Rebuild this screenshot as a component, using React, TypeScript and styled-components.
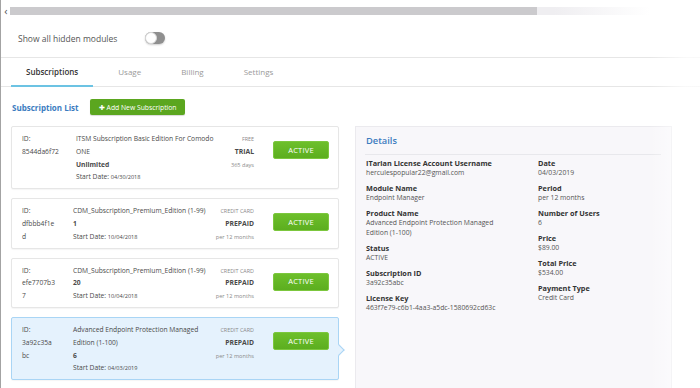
import styled, { createGlobalStyle } from 'styled-components';

type Sub = {
  id: string[];
  name: string[];
  qty: string;
  start: string;
  payment: string;
  plan: string;
  term: string;
  selected?: boolean;
  idWidth: number;
};

const subscriptions: Sub[] = [
  {
    id: ['8544da6f72'],
    name: ['ITSM Subscription Basic Edition For Comodo', 'ONE'],
    qty: 'Unlimited',
    start: '04/30/2018',
    payment: 'FREE',
    plan: 'TRIAL',
    term: '365 days',
    idWidth: 54,
  },
  {
    id: ['dfbbb4f1e', 'd'],
    name: ['CDM_Subscription_Premium_Edition (1-99)'],
    qty: '1',
    start: '10/04/2018',
    payment: 'CREDIT CARD',
    plan: 'PREPAID',
    term: 'per 12 months',
    idWidth: 51,
  },
  {
    id: ['efe7707b3', '7'],
    name: ['CDM_Subscription_Premium_Edition (1-99)'],
    qty: '20',
    start: '10/04/2018',
    payment: 'CREDIT CARD',
    plan: 'PREPAID',
    term: 'per 12 months',
    idWidth: 51,
  },
  {
    id: ['3a92c35a', 'bc'],
    name: ['Advanced Endpoint Protection Managed', 'Edition (1-100)'],
    qty: '6',
    start: '04/03/2019',
    payment: 'CREDIT CARD',
    plan: 'PREPAID',
    term: 'per 12 months',
    selected: true,
    idWidth: 51,
  },
];

const leftDetails = [
  { label: 'ITarian License Account Username', value: ['herculespopular22@gmail.com'] },
  { label: 'Module Name', value: ['Endpoint Manager'] },
  { label: 'Product Name', value: ['Advanced Endpoint Protection Managed', 'Edition (1-100)'] },
  { label: 'Status', value: ['ACTIVE'] },
  { label: 'Subscription ID', value: ['3a92c35abc'] },
  { label: 'License Key', value: ['463f7e79-c6b1-4aa3-a5dc-1580692cd63c'] },
];

const rightDetails = [
  { label: 'Date', value: ['04/03/2019'] },
  { label: 'Period', value: ['per 12 months'] },
  { label: 'Number of Users', value: ['6'] },
  { label: 'Price', value: ['$89.00'] },
  { label: 'Total Price', value: ['$534.00'] },
  { label: 'Payment Type', value: ['Credit Card'] },
];

const tabs = ['Subscriptions', 'Usage', 'Billing', 'Settings'];

const App = () => {
  return (
    <Page>
      <GlobalStyle />
      <ScrollStrip>
        <ScrollArrow>‹</ScrollArrow>
        <ScrollTrack>
          <ScrollThumb />
        </ScrollTrack>
      </ScrollStrip>

      <ToggleRow>
        <ToggleLabel>Show all hidden modules</ToggleLabel>
        <Toggle>
          <Knob />
        </Toggle>
      </ToggleRow>

      <TabBar>
        {tabs.map((t, i) => (
          <Tab key={t} $active={i === 0}>
            {t}
          </Tab>
        ))}
      </TabBar>

      <ListHeader>
        <ListTitle>Subscription List</ListTitle>
        <AddButton>
          <Plus>✚</Plus> Add New Subscription
        </AddButton>
      </ListHeader>

      <Body>
        <CardList>
          {subscriptions.map((s) => (
            <Card key={s.id.join('')} $selected={!!s.selected}>
              <IdCol $width={s.idWidth}>
                <Line>ID:</Line>
                {s.id.map((l) => (
                  <Line key={l}>{l}</Line>
                ))}
              </IdCol>
              <NameCol>
                {s.name.map((l) => (
                  <Line key={l}>{l}</Line>
                ))}
                <Line $bold>{s.qty}</Line>
                <Line>
                  Start Date: <SmallDate>{s.start}</SmallDate>
                </Line>
              </NameCol>
              <PriceCol>
                <SmallCaps>{s.payment}</SmallCaps>
                <Plan>{s.plan}</Plan>
                <Term>{s.term}</Term>
              </PriceCol>
              <ActiveButton>ACTIVE</ActiveButton>
            </Card>
          ))}
        </CardList>

        <DetailsPanel>
          <DetailsTitle>Details</DetailsTitle>
          <DetailsGrid>
            <DetailsCol>
              {leftDetails.map((d) => (
                <Field key={d.label}>
                  <FieldLabel>{d.label}</FieldLabel>
                  {d.value.map((v) => (
                    <FieldValue key={v}>{v}</FieldValue>
                  ))}
                </Field>
              ))}
            </DetailsCol>
            <DetailsCol>
              {rightDetails.map((d) => (
                <Field key={d.label}>
                  <FieldLabel>{d.label}</FieldLabel>
                  {d.value.map((v) => (
                    <FieldValue key={v}>{v}</FieldValue>
                  ))}
                </Field>
              ))}
            </DetailsCol>
          </DetailsGrid>
        </DetailsPanel>
      </Body>
      <FadeEdge />
    </Page>
  );
};

export default App;

const GlobalStyle = createGlobalStyle`
  html, body {
    margin: 0;
    padding: 0;
    background: #ffffff;
    font-family: 'Open Sans', 'Noto Sans', sans-serif;
  }
`;

const Page = styled.div`
  position: relative;
  width: 700px;
  height: 388px;
  overflow: hidden;
  box-sizing: border-box;
  border-left: 1px solid #a3a3a3;
  color: #444;
`;

const ScrollStrip = styled.div`
  display: flex;
  align-items: center;
  height: 8px;
  margin-top: 7px;
  padding-left: 1px;
`;

const ScrollArrow = styled.span`
  width: 8px;
  font-size: 11px;
  line-height: 8px;
  color: #555;
  text-align: center;
`;

const ScrollTrack = styled.div`
  height: 8px;
  width: 640px;
  background: linear-gradient(to right, #efeef1 85%, rgba(239, 238, 241, 0));
`;

const ScrollThumb = styled.div`
  height: 100%;
  width: 527px;
  background: #cbcacd;
`;

const ToggleRow = styled.div`
  display: flex;
  align-items: center;
  height: 38px;
  padding: 4px 0 0 17px;
  border-bottom: 1px solid #e6e6e6;
`;

const ToggleLabel = styled.span`
  font-size: 8.5px;
  color: #555;
  width: 127px;
`;

const Toggle = styled.div`
  width: 20px;
  height: 12px;
  border-radius: 6px;
  background: #8f8f8f;
  position: relative;
  box-shadow: 0 1px 2px rgba(0, 0, 0, 0.2);
`;

const Knob = styled.div`
  position: absolute;
  left: 0;
  top: 0;
  width: 12px;
  height: 12px;
  border-radius: 50%;
  background: #fff;
  box-sizing: border-box;
  border: 1px solid #d8d8d8;
`;

const TabBar = styled.div`
  display: flex;
  gap: 10px;
  height: 28px;
  padding-left: 10px;
  border-bottom: 1px solid #e6e6e6;
`;

const Tab = styled.div<{ $active: boolean }>`
  display: flex;
  align-items: center;
  padding: 0 15px;
  font-size: 8px;
  font-weight: ${(p) => (p.$active ? 600 : 400)};
  color: ${(p) => (p.$active ? '#333' : '#9a9a9a')};
  border-bottom: 2px solid ${(p) => (p.$active ? '#6cc3e3' : 'transparent')};
  margin-bottom: -1px;
`;

const ListHeader = styled.div`
  display: flex;
  align-items: center;
  gap: 11px;
  height: 39px;
  padding: 1px 0 0 11px;
  box-sizing: border-box;
`;

const ListTitle = styled.span`
  font-size: 8px;
  font-weight: 700;
  color: #3c7cbf;
`;

const AddButton = styled.div`
  display: flex;
  align-items: center;
  gap: 2px;
  height: 16px;
  padding: 0 8px 0 9px;
  border-radius: 2px;
  background: #5ba61f;
  color: #fff;
  font-size: 6.8px;
  box-shadow: 0 1px 1px rgba(0, 0, 0, 0.15);
`;

const Plus = styled.span`
  font-size: 7px;
`;

const Body = styled.div`
  display: flex;
  gap: 16px;
  padding-left: 10px;
`;

const CardList = styled.div`
  display: flex;
  flex-direction: column;
  gap: 9px;
  width: 328px;
`;

const Card = styled.div<{ $selected: boolean }>`
  position: relative;
  display: flex;
  padding: 6px 9px 4px 10px;
  border: 1px solid ${(p) => (p.$selected ? '#a9d5f5' : '#e6e6e6')};
  background: ${(p) => (p.$selected ? '#e5f2fd' : '#fff')};
  border-radius: 2px;
  box-shadow: 0 1px 1px rgba(0, 0, 0, 0.04);
  font-size: 6.7px;
  line-height: 12.8px;
  color: #4a4a4a;

  ${(p) =>
    p.$selected &&
    `
    &::after {
      content: '';
      position: absolute;
      right: -5px;
      top: 28px;
      width: 7px;
      height: 7px;
      background: #e5f2fd;
      border-top: 1px solid #a9d5f5;
      border-right: 1px solid #a9d5f5;
      transform: rotate(45deg);
    }
  `}
`;

const IdCol = styled.div<{ $width: number }>`
  width: ${(p) => p.$width}px;
  flex-shrink: 0;
`;

const NameCol = styled.div`
  flex: 1;
`;

const Line = styled.div<{ $bold?: boolean }>`
  white-space: nowrap;
  font-weight: ${(p) => (p.$bold ? 700 : 400)};
`;

const SmallDate = styled.span`
  font-size: 5.6px;
`;

const PriceCol = styled.div`
  display: flex;
  flex-direction: column;
  align-items: flex-end;
  margin-right: 19px;
`;

const SmallCaps = styled.div`
  font-size: 5.4px;
  color: #8a8a8a;
`;

const Plan = styled.div`
  font-size: 6.8px;
  font-weight: 700;
  color: #4a4a4a;
`;

const Term = styled.div`
  font-size: 5.6px;
  color: #8a8a8a;
`;

const ActiveButton = styled.div`
  align-self: flex-start;
  margin-top: 8px;
  width: 56px;
  height: 18px;
  display: flex;
  align-items: center;
  justify-content: center;
  border-radius: 2px;
  background: linear-gradient(#6dbf2b, #5cae1f);
  border: 1px solid #7cc73e;
  box-sizing: border-box;
  color: #fff;
  font-size: 7.5px;
  letter-spacing: 0.2px;
`;

const DetailsPanel = styled.div`
  width: 317px;
  height: 264px;
  box-sizing: border-box;
  background: #f8f7fa;
  border: 1px solid #ebeaee;
  padding: 0 10px 0 9px;
`;

const DetailsTitle = styled.div`
  height: 27px;
  display: flex;
  align-items: center;
  font-size: 9.3px;
  font-weight: 600;
  color: #3c7cbf;
  border-bottom: 1px solid #e8e8ec;
  padding-left: 1px;
`;

const DetailsGrid = styled.div`
  display: grid;
  grid-template-columns: 172px 1fr;
  padding: 3px 0 0 1px;
`;

const DetailsCol = styled.div`
  display: flex;
  flex-direction: column;
  gap: 5px;
`;

const Field = styled.div`
  display: flex;
  flex-direction: column;
`;

const FieldLabel = styled.div`
  font-size: 7.3px;
  line-height: 10px;
  font-weight: 700;
  color: #333;
`;

const FieldValue = styled.div`
  font-size: 6.8px;
  line-height: 10px;
  color: #555;
`;

const FadeEdge = styled.div`
  position: absolute;
  top: 0;
  right: 0;
  width: 50px;
  height: 100%;
  background: linear-gradient(to right, rgba(255, 255, 255, 0), rgba(255, 255, 255, 0.75) 70%);
  pointer-events: none;
`;
